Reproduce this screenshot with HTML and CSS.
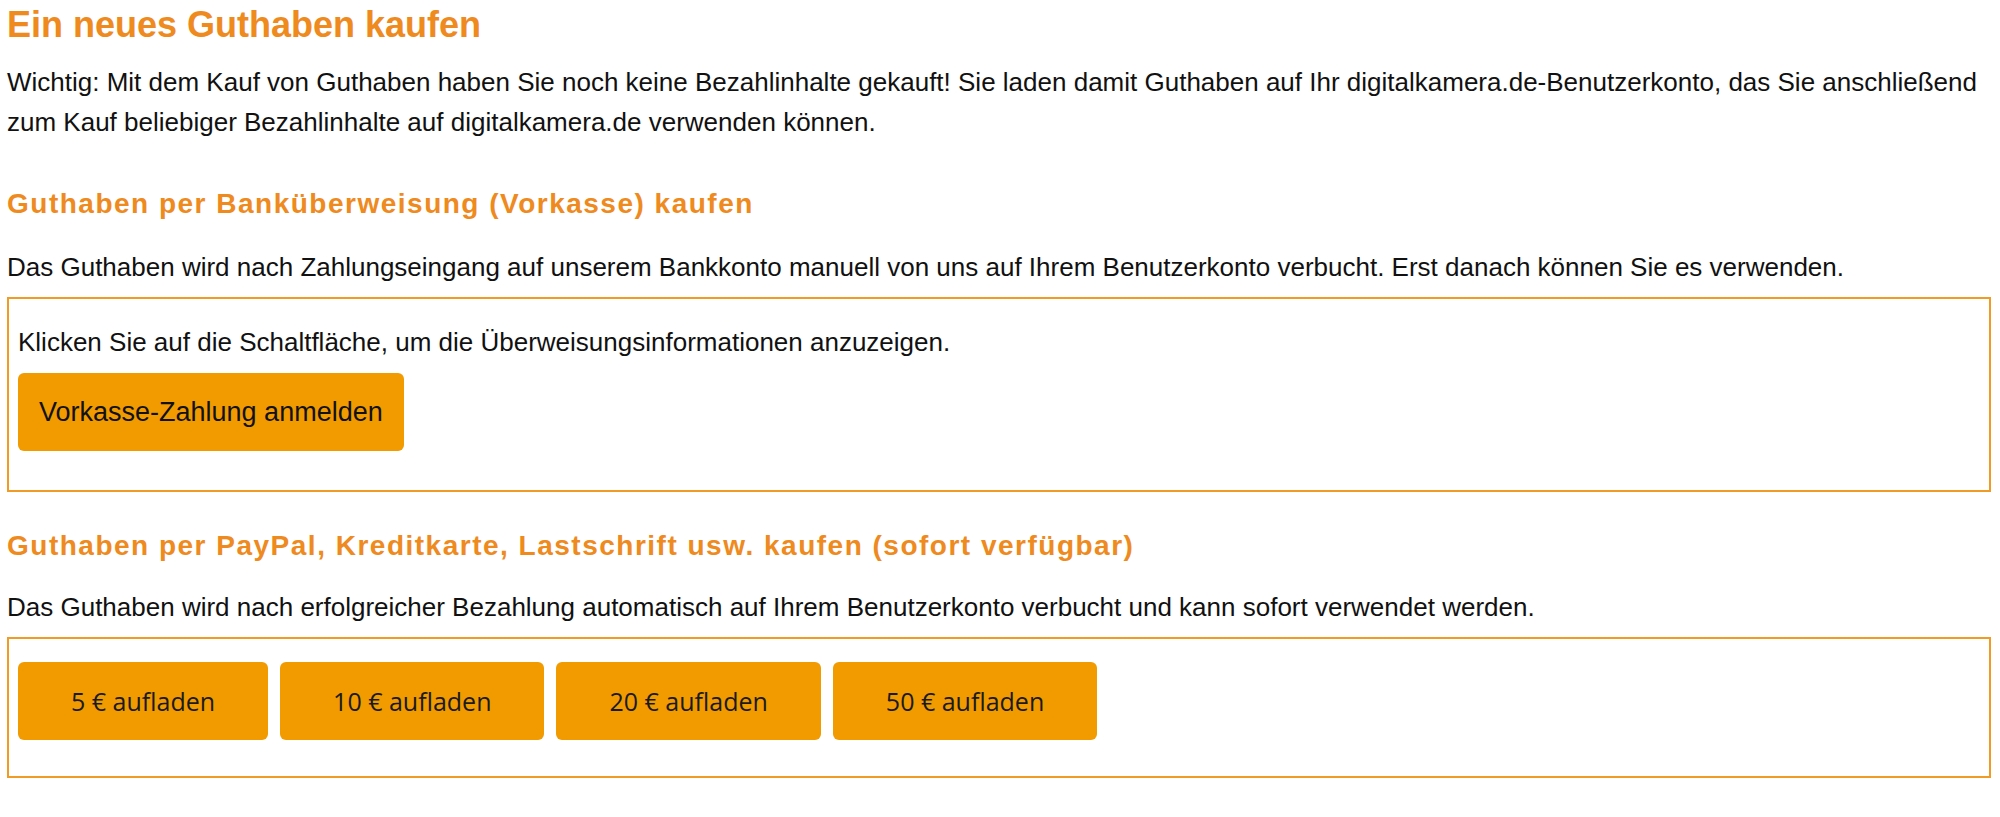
FILE: index.html
```html
<!DOCTYPE html>
<html lang="de">
<head>
<meta charset="utf-8">
<title>Ein neues Guthaben kaufen</title>
<link rel="stylesheet" href="styles.css">
</head>
<body>
<main class="page">
  <h1 class="title">Ein neues Guthaben kaufen</h1>
  <p class="intro">Wichtig: Mit dem Kauf von Guthaben haben Sie noch keine Bezahlinhalte gekauft! Sie laden damit Guthaben auf Ihr digitalkamera.de-Benutzerkonto, das Sie anschließend zum Kauf beliebiger Bezahlinhalte auf digitalkamera.de verwenden können.</p>

  <h2 class="section-title">Guthaben per Banküberweisung (Vorkasse) kaufen</h2>
  <p class="text">Das Guthaben wird nach Zahlungseingang auf unserem Bankkonto manuell von uns auf Ihrem Benutzerkonto verbucht. Erst danach können Sie es verwenden.</p>
  <section class="box">
    <p class="text">Klicken Sie auf die Schaltfläche, um die Überweisungsinformationen anzuzeigen.</p>
    <button class="btn btn-prepay" type="button">Vorkasse-Zahlung anmelden</button>
  </section>

  <h2 class="section-title">Guthaben per PayPal, Kreditkarte, Lastschrift usw. kaufen (sofort verfügbar)</h2>
  <p class="text">Das Guthaben wird nach erfolgreicher Bezahlung automatisch auf Ihrem Benutzerkonto verbucht und kann sofort verwendet werden.</p>
  <section class="box box-amounts">
    <div class="amounts">
      <button class="btn btn-amount" type="button">5 € aufladen</button>
      <button class="btn btn-amount" type="button">10 € aufladen</button>
      <button class="btn btn-amount" type="button">20 € aufladen</button>
      <button class="btn btn-amount" type="button">50 € aufladen</button>
    </div>
  </section>
</main>
</body>
</html>
```

FILE: styles.css
```css
html, body {
  margin: 0;
  background: #ffffff;
}

body {
  font-family: "Liberation Sans", Arial, sans-serif;
  font-size: 26px;
  line-height: 40px;
  color: #111111;
}

.page {
  padding: 3px 9px 0 7px;
}

.title {
  margin: 0 0 15px;
  font-size: 36px;
  line-height: 44px;
  font-weight: bold;
  color: #ee8a1e;
}

.intro {
  margin: 0 0 4px;
}

.section-title {
  margin: 44px 0 25px;
  font-size: 28px;
  line-height: 36px;
  font-weight: bold;
  letter-spacing: 1.5px;
  color: #ee8a1e;
}

.box + .section-title {
  margin-top: 36px;
  margin-bottom: 23px;
}

.text {
  margin: 0;
}

.box {
  margin-top: 10px;
  border: 2px solid #ef9b26;
  padding: 23px 9px 39px;
}

.box-amounts {
  padding-bottom: 36px;
}

.btn {
  display: block;
  border: 0;
  border-radius: 6px;
  background: #f19b00;
  color: #111111;
  cursor: pointer;
}

.btn-prepay {
  margin-top: 11px;
  height: 78px;
  padding: 0 21px;
  font-family: "Liberation Sans", Arial, sans-serif;
  font-size: 27px;
}

.amounts {
  display: flex;
  gap: 12px;
}

.btn-amount {
  height: 78px;
  padding: 0 53px;
  font-family: "Open Sans", "Noto Sans", sans-serif;
  font-size: 25px;
  color: #1a1a1a;
}
```
